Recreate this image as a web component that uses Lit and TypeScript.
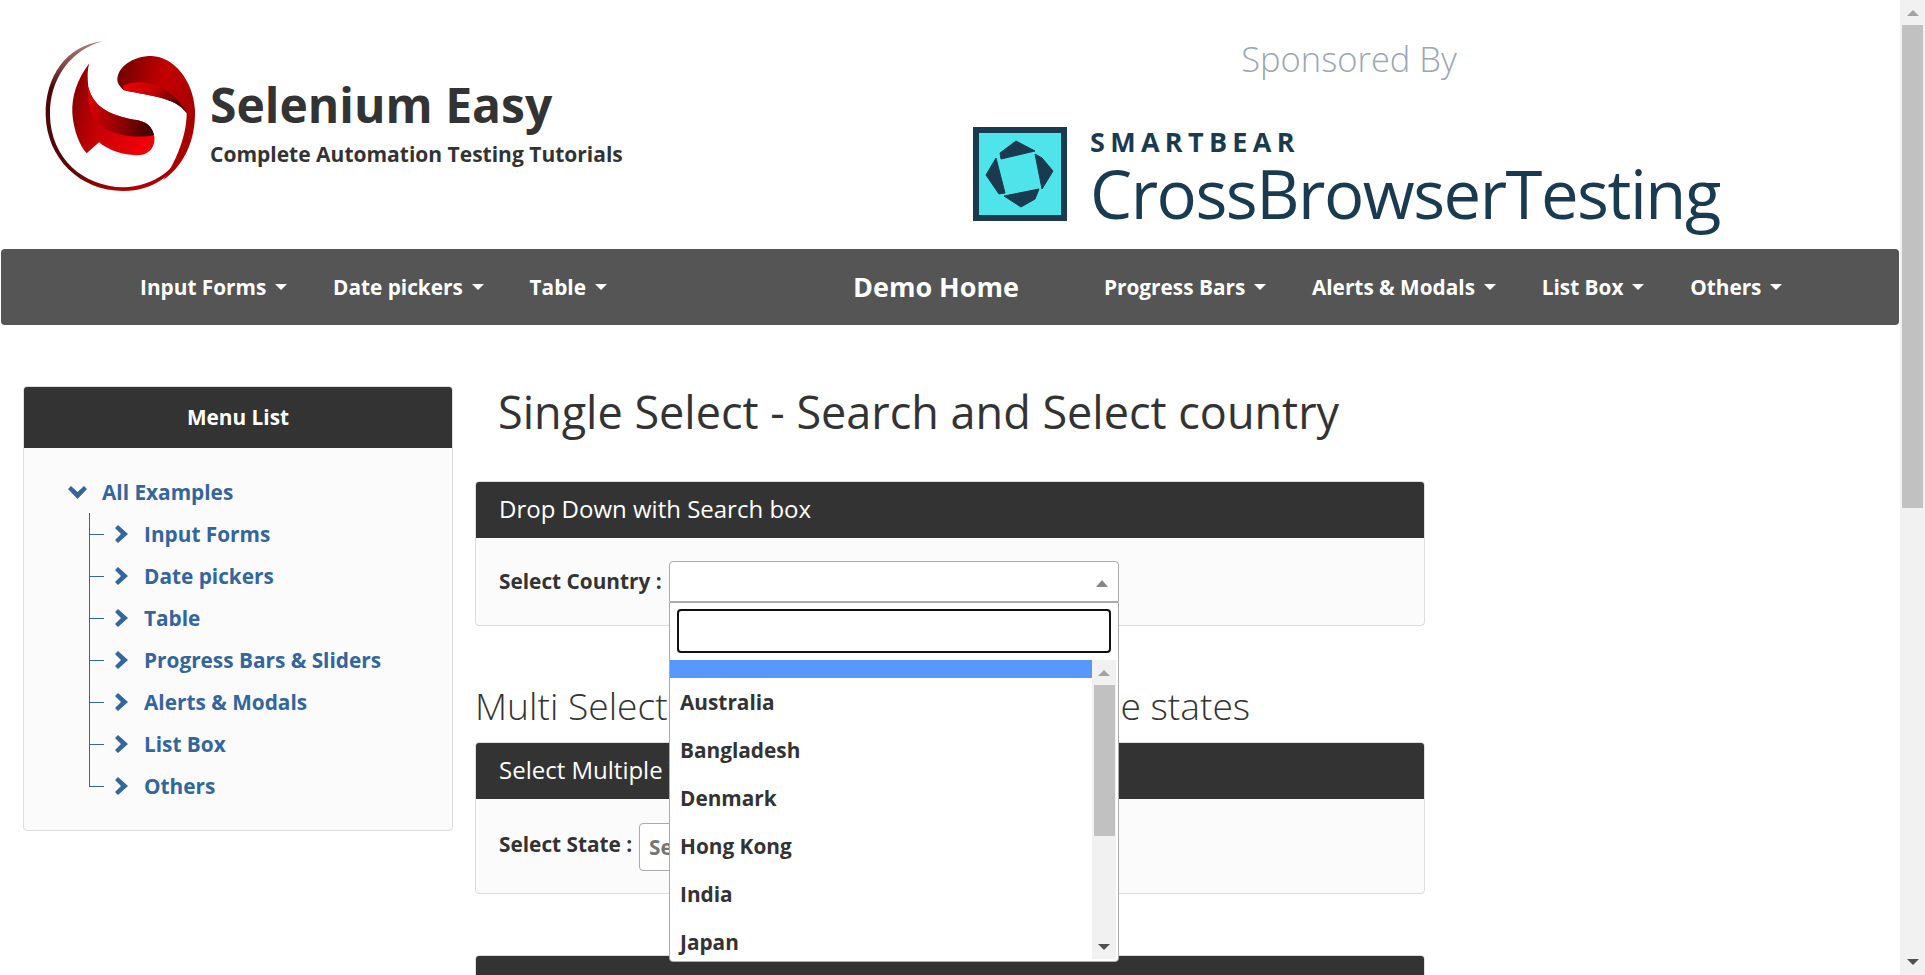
import { LitElement, css, html, svg } from 'lit';
import { customElement } from 'lit/decorators.js';

const NAV_LEFT = ['Input Forms', 'Date pickers', 'Table'];
const NAV_RIGHT = ['Progress Bars', 'Alerts & Modals', 'List Box', 'Others'];
const MENU = ['Input Forms', 'Date pickers', 'Table', 'Progress Bars & Sliders', 'Alerts & Modals', 'List Box', 'Others'];
const COUNTRIES = ['Australia', 'Bangladesh', 'Denmark', 'Hong Kong', 'India', 'Japan'];

const logo = svg`
  <svg class="logo" viewBox="0 0 540 510" width="180" height="170">
    <defs>
      <linearGradient id="ring" x1="0.3" y1="0" x2="0.5" y2="1">
        <stop offset="0" stop-color="#b08080" />
        <stop offset="0.25" stop-color="#4a0808" />
        <stop offset="0.8" stop-color="#5a0505" />
        <stop offset="1" stop-color="#b00000" />
      </linearGradient>
      <linearGradient id="lobe" x1="0" y1="0" x2="1" y2="0.3">
        <stop offset="0" stop-color="#6a0202" />
        <stop offset="0.6" stop-color="#c40000" />
        <stop offset="1" stop-color="#a80000" />
      </linearGradient>
      <linearGradient id="fold" x1="0" y1="0" x2="1" y2="0.35">
        <stop offset="0" stop-color="#f00008" />
        <stop offset="0.55" stop-color="#c00004" />
        <stop offset="1" stop-color="#4a0202" />
      </linearGradient>
      <linearGradient id="base" x1="0" y1="0" x2="1" y2="0.25">
        <stop offset="0" stop-color="#7a0202" />
        <stop offset="0.45" stop-color="#c80005" />
        <stop offset="1" stop-color="#f00008" />
      </linearGradient>
      <linearGradient id="shade" x1="0" y1="0" x2="1" y2="0.1">
        <stop offset="0" stop-color="#e00006" />
        <stop offset="0.6" stop-color="#8a0203" />
        <stop offset="1" stop-color="#440202" />
      </linearGradient>
    </defs>
    <path fill="url(#ring)" d="M218 34C110 45 45 140 47 255C50 385 150 483 280 483C370 483 450 430 480 330C440 420 370 470 280 472C160 470 62 385 60 255C58 150 120 60 218 34Z" />
    <path fill="url(#lobe)" d="M262 150C262 110 310 78 365 78C430 80 490 150 495 240C497 320 470 400 400 450C435 400 470 320 470 250C440 200 340 195 280 180C270 170 262 160 262 150Z" />
    <path fill="url(#fold)" d="M280 166C340 140 430 170 470 250C440 200 340 195 280 180Z" />
    <path fill="url(#base)" d="M178 100C140 150 125 200 127 250C130 300 150 350 170 370L207 337C240 365 290 378 330 375C365 372 378 340 372 315C365 285 345 275 320 270C260 260 190 240 175 170C172 140 172 120 178 100Z" />
    <path fill="url(#shade)" d="M175 170C190 240 260 260 320 270C345 275 365 285 372 315C330 325 260 320 215 290C185 270 170 220 175 170Z" />
  </svg>`;

const bearIcon = svg`
  <svg class="bear" viewBox="0 0 94 94" width="94" height="94">
    <rect x="3" y="3" width="88" height="88" fill="#4fe3ea" stroke="#1a3a4f" stroke-width="6" />
    <g fill="#1a3a4f" stroke="#1a3a4f" stroke-width="1" stroke-linejoin="round">
      <polygon points="27,26 43,14 62,24 28,32" />
      <polygon points="62,27 69,31 80,44 69,62" />
      <polygon points="23,31 13,48 26,67 32,66" />
      <polygon points="31,69 66,62 62,72 48,80" />
    </g>
  </svg>`;

const chevronRight = svg`<svg class="chev-r" viewBox="0 0 13 18" width="13" height="18"><polygon points="0,3 3,0 13,9 3,18 0,15 6,9" /></svg>`;
const chevronDown = svg`<svg class="chev-d" viewBox="0 0 19 13" width="19" height="13"><polygon points="0,3 3,0 9.5,6 16,0 19,3 9.5,13" /></svg>`;

@customElement('app-root')
export class AppRoot extends LitElement {
  static styles = css`
    :host {
      display: flex;
      height: 975px;
      overflow: hidden;
      background: #fff;
      font-family: 'Open Sans', 'Liberation Sans', sans-serif;
      color: #333;
    }
    .page {
      width: 1900px;
      flex: none;
    }

    /* header */
    .header {
      display: flex;
      height: 249px;
    }
    .brand {
      width: 950px;
      display: flex;
      padding: 30px 0 0 30px;
      box-sizing: border-box;
    }
    .logo {
      flex: none;
    }
    .brand-text {
      padding-top: 45px;
    }
    .brand-title {
      font-size: 48px;
      font-weight: 700;
      line-height: 60px;
    }
    .brand-sub {
      font-size: 21px;
      font-weight: 700;
      line-height: 28px;
      margin-top: 5px;
    }
    .sponsor {
      margin-left: 23px;
      width: 752px;
      display: flex;
      flex-direction: column;
    }
    .sponsor-title {
      text-align: center;
      font-size: 34.5px;
      font-weight: 300;
      color: #9aa7b4;
      line-height: 44px;
      margin-top: 37px;
    }
    .bear-row {
      display: flex;
      margin-top: 46px;
    }
    .bear {
      flex: none;
    }
    .bear-text {
      margin-left: 23px;
      color: #1a3a4f;
    }
    .smartbear {
      font-size: 27px;
      font-weight: 700;
      letter-spacing: 5.3px;
      line-height: 28px;
      margin-top: 1px;
    }
    .cbt {
      font-size: 67px;
      font-weight: 400;
      letter-spacing: -1.5px;
      line-height: 60px;
      margin-top: 7px;
    }

    /* navbar */
    .nav {
      margin: 0 0 0 1px;
      width: 1898px;
      height: 76px;
      background: #555;
      border-radius: 4px;
      display: flex;
      align-items: center;
      color: #fff;
      box-sizing: border-box;
      padding-left: 139px;
    }
    .nav-group {
      display: flex;
      gap: 45.7px;
    }
    .nav-item {
      display: flex;
      align-items: center;
      font-size: 20.8px;
      font-weight: 700;
      white-space: nowrap;
    }
    .caret {
      width: 0;
      height: 0;
      margin-left: 9px;
      border-left: 6px solid transparent;
      border-right: 6px solid transparent;
      border-top: 6px solid #fff;
    }
    .nav-home {
      font-size: 27px;
      font-weight: 700;
      margin-left: 246px;
      margin-right: 85px;
      padding-bottom: 2px;
      white-space: nowrap;
    }

    /* content */
    .content {
      display: flex;
      padding: 61px 0 0 23px;
      gap: 22px;
      align-items: flex-start;
    }
    .panel {
      border: 1px solid #ddd;
      border-radius: 4px;
      background: #fbfbfb;
      box-sizing: border-box;
    }
    .panel-head {
      background: #333;
      color: #fff;
      border-radius: 3px 3px 0 0;
      height: 56px;
      display: flex;
      align-items: center;
      padding: 0 23px 3px;
      box-sizing: border-box;
      font-size: 24px;
      white-space: nowrap;
    }
    .side {
      width: 430px;
      flex: none;
    }
    .side .panel-head {
      justify-content: center;
      font-size: 20.8px;
      font-weight: 700;
      height: 61px;
      padding-bottom: 1px;
    }
    .tree {
      padding: 23px 0 23px 44px;
      color: #34659b;
      font-size: 20.8px;
      font-weight: 700;
    }
    .tree-root,
    .tree-item {
      display: flex;
      align-items: center;
      height: 42px;
      white-space: nowrap;
    }
    .chev-r,
    .chev-d {
      fill: #34659b;
      flex: none;
    }
    .chev-d {
      margin-right: 15px;
    }
    .tree-item .chev-r {
      margin: 0 16px 0 11px;
    }
    .tree-list {
      margin-left: 21px;
    }
    .conn {
      width: 15px;
      align-self: stretch;
      flex: none;
      background:
        linear-gradient(#34659b, #34659b) left top / 1px 100% no-repeat,
        linear-gradient(#34659b, #34659b) left center / 100% 1px no-repeat;
    }
    .tree-item.last .conn {
      background-size: 1px 50%, 100% 1px;
    }

    .main {
      width: 950px;
      flex: none;
    }
    h2 {
      margin: 0 0 0 23px;
      font-size: 45px;
      font-weight: 400;
      line-height: 52px;
      height: 95px;
      box-sizing: border-box;
      white-space: nowrap;
    }
    .main h3 {
      margin: 0;
      font-size: 37.2px;
      font-weight: 300;
      line-height: 48px;
      padding-top: 56px;
      height: 116px;
      box-sizing: border-box;
      white-space: nowrap;
    }
    .panel-body {
      display: flex;
      align-items: center;
      padding: 23px 23px;
      font-size: 20.8px;
      font-weight: 700;
      white-space: nowrap;
    }
    .state-body {
      padding: 24px 23px 22px;
    }
    .label {
      flex: none;
      width: 170px;
      padding-bottom: 2px;
    }
    .state-body .label {
      width: 140px;
      padding-bottom: 6px;
    }
    .select {
      position: relative;
      width: 450px;
      height: 41px;
      flex: none;
      box-sizing: border-box;
      border: 1px solid #aaa;
      border-radius: 4px 4px 0 0;
      background: #fff;
    }
    .up-arrow {
      position: absolute;
      right: 10px;
      top: 18px;
      width: 0;
      height: 0;
      border-left: 6px solid transparent;
      border-right: 6px solid transparent;
      border-bottom: 7px solid #888;
    }
    .dropdown {
      position: absolute;
      z-index: 2;
      left: -1px;
      top: 40px;
      width: 450px;
      height: 360px;
      box-sizing: border-box;
      border: 1px solid #aaa;
      border-radius: 0 0 4px 4px;
      background: #fff;
      overflow: hidden;
    }
    .search {
      height: 44px;
      margin: 6px 7px 0;
      box-sizing: border-box;
      border: 2px solid #101010;
      border-radius: 4px;
      background: #fff;
    }
    .results {
      display: flex;
      margin-top: 7px;
    }
    .options {
      width: 422px;
      flex: none;
      height: 299px;
      overflow: hidden;
    }
    .opt-blank {
      height: 18px;
      background: #5897fb;
    }
    .opt {
      height: 48px;
      line-height: 48px;
      padding-left: 10px;
    }
    .sb {
      width: 24px;
      flex: none;
      background: #f1f1f1;
      display: flex;
      flex-direction: column;
      align-items: center;
      height: 299px;
    }
    .sb-up,
    .sb-down {
      width: 0;
      height: 0;
      border-left: 6px solid transparent;
      border-right: 6px solid transparent;
      flex: none;
    }
    .sb-up {
      border-bottom: 6px solid #a3a3a3;
      margin-top: 10px;
    }
    .sb-thumb {
      width: 21px;
      height: 151px;
      margin-top: 9px;
      background: #c1c1c1;
      flex: none;
    }
    .sb-down {
      border-top: 6px solid #505050;
      margin-top: auto;
      margin-bottom: 9px;
    }
    .state-input {
      width: 449px;
      height: 48px;
      box-sizing: border-box;
      border: 1px solid #aaa;
      border-radius: 4px;
      background: #fff;
      color: #757575;
      line-height: 46px;
      padding-left: 9px;
      flex: none;
    }
    .gap-panel {
      margin-top: 61px;
    }
    .gap-panel .panel-head {
      height: 66px;
      padding-bottom: 0;
    }

    /* page scrollbar */
    .scrollbar {
      width: 25px;
      flex: none;
      height: 975px;
      background: #f1f1f1;
      display: flex;
      flex-direction: column;
      align-items: center;
    }
    .scrollbar .sb-thumb {
      height: 483px;
    }
    .scrollbar .sb-down {
      margin-bottom: 10px;
    }
  `;

  render() {
    return html`
      <div class="page">
        <div class="header">
          <div class="brand">
            ${logo}
            <div class="brand-text">
              <div class="brand-title">Selenium Easy</div>
              <div class="brand-sub">Complete Automation Testing Tutorials</div>
            </div>
          </div>
          <div class="sponsor">
            <div class="sponsor-title">Sponsored By</div>
            <div class="bear-row">
              ${bearIcon}
              <div class="bear-text">
                <div class="smartbear">SMARTBEAR</div>
                <div class="cbt">CrossBrowserTesting</div>
              </div>
            </div>
          </div>
        </div>

        <div class="nav">
          <div class="nav-group">
            ${NAV_LEFT.map((n) => html`<div class="nav-item">${n}<span class="caret"></span></div>`)}
          </div>
          <div class="nav-home">Demo Home</div>
          <div class="nav-group">
            ${NAV_RIGHT.map((n) => html`<div class="nav-item">${n}<span class="caret"></span></div>`)}
          </div>
        </div>

        <div class="content">
          <div class="panel side">
            <div class="panel-head">Menu List</div>
            <div class="tree">
              <div class="tree-root">${chevronDown}All Examples</div>
              <div class="tree-list">
                ${MENU.map(
                  (m, i) => html`
                    <div class="tree-item ${i === MENU.length - 1 ? 'last' : ''}">
                      <span class="conn"></span>${chevronRight}${m}
                    </div>
                  `,
                )}
              </div>
            </div>
          </div>

          <div class="main">
            <h2>Single Select - Search and Select country</h2>
            <div class="panel">
              <div class="panel-head">Drop Down with Search box</div>
              <div class="panel-body">
                <span class="label">Select Country :</span>
                <div class="select">
                  <span class="up-arrow"></span>
                  <div class="dropdown">
                    <div class="search"></div>
                    <div class="results">
                      <div class="options">
                        <div class="opt-blank"></div>
                        ${COUNTRIES.map((c) => html`<div class="opt">${c}</div>`)}
                      </div>
                      <div class="sb">
                        <span class="sb-up"></span>
                        <span class="sb-thumb"></span>
                        <span class="sb-down"></span>
                      </div>
                    </div>
                  </div>
                </div>
              </div>
            </div>

            <h3>Multi Select - Search and Select multiple states</h3>
            <div class="panel">
              <div class="panel-head">Select Multiple Values</div>
              <div class="panel-body state-body">
                <span class="label">Select State :</span>
                <div class="state-input">Select state(s)</div>
              </div>
            </div>

            <div class="panel gap-panel">
              <div class="panel-head">Drop Down with Disabled values</div>
            </div>
          </div>
        </div>
      </div>

      <div class="scrollbar">
        <span class="sb-up"></span>
        <span class="sb-thumb"></span>
        <span class="sb-down"></span>
      </div>
    `;
  }
}
